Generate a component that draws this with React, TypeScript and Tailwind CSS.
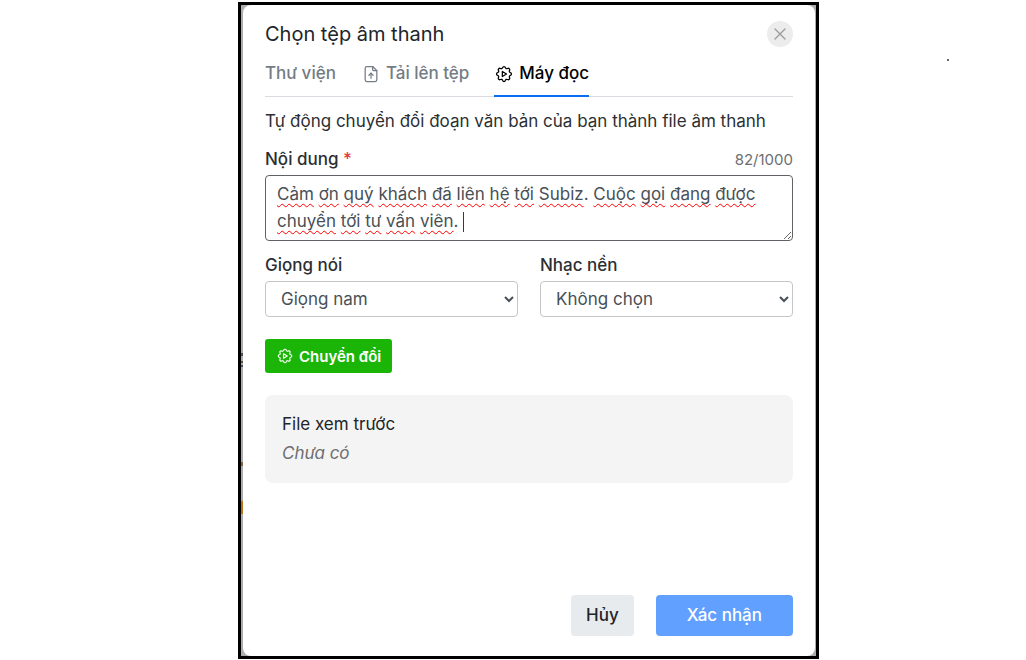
import { useState } from 'react';
import { X } from 'lucide-react';
import { TbFileUpload, TbSettingsAutomation } from 'react-icons/tb';

const MAX_LENGTH = 1000;

const INITIAL_CONTENT = 'Cảm ơn quý khách đã liên hệ tới Subiz. Cuộc gọi đang được chuyển tới tư vấn viên. ';

const TABS = [
  { id: 'library', label: 'Thư viện', icon: null },
  { id: 'upload', label: 'Tải lên tệp', icon: TbFileUpload },
  { id: 'tts', label: 'Máy đọc', icon: TbSettingsAutomation },
];

const TabBar = () => {
  const [active, setActive] = useState('tts');

  return (
    <div role="tablist" className="mt-[13px] flex gap-[25px] border-b border-[#d9dbe1]">
      {TABS.map(({ id, label, icon: Icon }) => (
        <button
          key={id}
          type="button"
          role="tab"
          aria-selected={active === id}
          onClick={() => setActive(id)}
          className={
            active === id
              ? '-mb-px flex h-[37px] items-start gap-[5px] border-b-2 border-[#0a6cf5] font-medium text-black'
              : '-mb-px flex h-[37px] items-start gap-[5px] border-b-2 border-transparent font-medium text-[#747c85]'
          }
        >
          {Icon && <Icon className="mt-1 size-5" strokeWidth={1.5} aria-hidden="true" />}
          {label}
        </button>
      ))}
    </div>
  );
};

// Draws the spelling marks over each word of the textarea, plus the caret
const SpellMarks = ({ text }: { text: string }) => (
  <div
    aria-hidden="true"
    className="pointer-events-none absolute inset-0 border border-transparent px-[11px] py-[5px] whitespace-pre-wrap text-transparent"
  >
    {text.split(/([\s.]+)/).map((part, i) =>
      /^[\s.]*$/.test(part) ? (
        <span key={i}>{part}</span>
      ) : (
        <span
          key={i}
          className="underline decoration-[#ff0000] decoration-wavy decoration-1 underline-offset-3 [text-decoration-skip-ink:none]"
        >
          {part}
        </span>
      )
    )}
    <span className="inline-block h-5 w-px bg-[#343a40] align-middle" />
  </div>
);

const ContentField = () => {
  const [content, setContent] = useState(INITIAL_CONTENT);

  return (
    <div className="mt-[11px]">
      <div className="flex items-center justify-between">
        <label htmlFor="content" className="font-medium">
          Nội dung <span className="text-[#e53935]">*</span>
        </label>
        <span className="text-[15px] text-[#6c6e70]">{content.length}/{MAX_LENGTH}</span>
      </div>
      <div className="relative mt-[2px] flex text-[#495057]">
        <textarea
          id="content"
          rows={2}
          maxLength={MAX_LENGTH}
          spellCheck={false}
          value={content}
          onChange={(e) => setContent(e.target.value)}
          className="h-[66px] w-full resize-y overflow-hidden rounded border border-[#5f6266] px-[11px] py-[5px] outline-none"
        />
        <SpellMarks text={content} />
      </div>
    </div>
  );
};

const SelectField = ({ id, label, options }: { id: string; label: string; options: string[] }) => (
  <div className="flex flex-1 flex-col">
    <label htmlFor={id} className="font-medium">
      {label}
    </label>
    <select id={id} className="mt-[2px] h-9 w-full rounded border border-[#c4c6c9] bg-white pl-[11px] text-[#495057]">
      {options.map((option) => (
        <option key={option}>{option}</option>
      ))}
    </select>
  </div>
);

const Dialog = () => (
  <section
    role="dialog"
    aria-labelledby="dialog-title"
    className="flex flex-1 flex-col rounded-lg bg-white px-[22px] pt-4 pb-5"
  >
    <header className="flex items-center justify-between">
      <h1 id="dialog-title" className="text-xl leading-[26px] text-[#212529]">
        Chọn tệp âm thanh
      </h1>
      <button
        type="button"
        aria-label="Đóng"
        className="flex size-[26px] items-center justify-center rounded-full bg-[#ececec] text-[#999999]"
      >
        <X className="size-5" strokeWidth={1.5} />
      </button>
    </header>

    <TabBar />

    <p className="mt-[11px]">Tự động chuyển đổi đoạn văn bản của bạn thành file âm thanh</p>

    <ContentField />

    <div className="mt-[11px] flex gap-[22px]">
      <SelectField id="voice" label="Giọng nói" options={['Giọng nam', 'Giọng nữ']} />
      <SelectField id="music" label="Nhạc nền" options={['Không chọn']} />
    </div>

    <button
      type="button"
      className="mt-[22px] flex h-[34px] items-center gap-[5px] self-start rounded-[3px] bg-[#1ab506] px-[11px] text-[15px] font-semibold text-white"
    >
      <TbSettingsAutomation className="size-[18px]" strokeWidth={1.5} aria-hidden="true" />
      Chuyển đổi
    </button>

    <div className="mt-[22px] rounded-lg bg-[#f4f4f4] px-[17px] py-[15px]">
      <h2 className="leading-[29px] text-[#212529]">File xem trước</h2>
      <p className="leading-[29px] text-[#6c6e70] italic">Chưa có</p>
    </div>

    <footer className="mt-auto flex justify-end gap-[22px] font-medium">
      <button type="button" className="h-[41px] rounded bg-[#e8ebee] px-[15px] text-[#212529]">
        Hủy
      </button>
      <button type="button" className="h-[41px] rounded bg-[#62a0ff] px-[31px] text-white">
        Xác nhận
      </button>
    </footer>
  </section>
);

// Sliver of the dimmed page that stays visible beside the dialog
const PageEdge = () => (
  <div aria-hidden="true" className="w-[2px] bg-[#adadad]">
    <div className="mt-[348px] h-[3px] bg-[#47525c]" />
    <div className="mt-[5px] h-[2px] bg-[#5d5347]" />
    <div className="mt-[2px] h-[2px] bg-[#47525c]" />
    <div className="mt-[95px] h-[4px] bg-[#8a6238]" />
    <div className="mt-[35px] h-[13px] bg-[#b87416]" />
  </div>
);

const App = () => {
  return (
    <main className="flex min-h-screen bg-white pt-[2px] pb-px pl-[238px] font-['Inter','Noto_Sans',sans-serif] text-[17px] leading-[27px] text-[#2b2f33]">
      <div className="flex flex-1 border-[3px] border-black bg-[#adadad] pr-px">
        <PageEdge />
        <Dialog />
      </div>
      <div className="w-[207px] pt-[57px] pl-[128px]">
        <div className="size-[2px] bg-[#666666]" />
      </div>
    </main>
  );
};

export default App;
